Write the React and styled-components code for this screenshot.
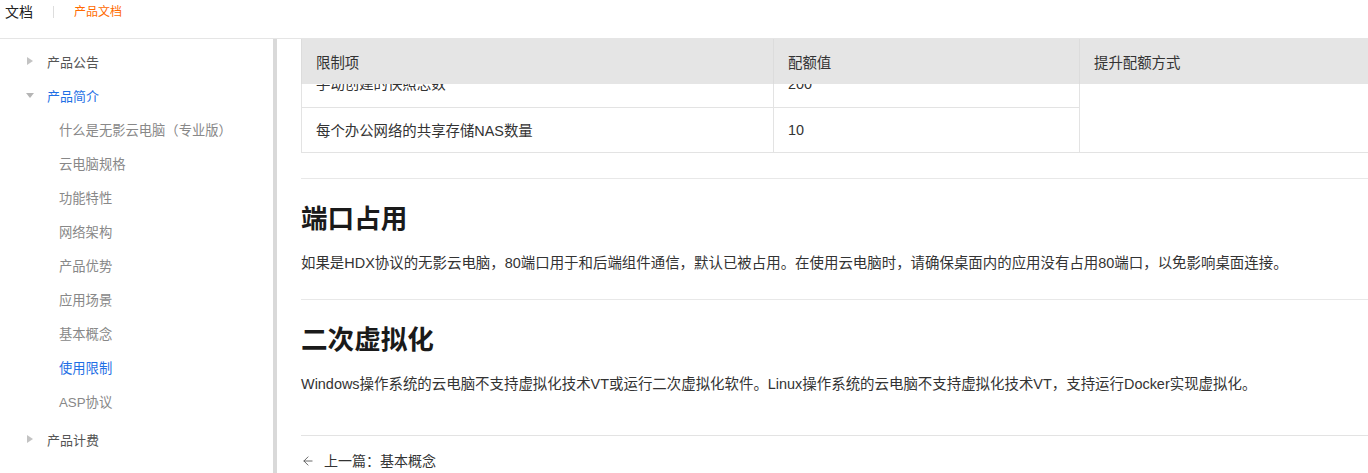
import React from "react";
import styled, { createGlobalStyle } from "styled-components";
import { ArrowLeft } from "lucide-react";

const GlobalStyle = createGlobalStyle`
  html, body {
    margin: 0;
    padding: 0;
    background: #fff;
    overflow: hidden;
  }
  body {
    font-family: "Liberation Sans", "Noto Sans CJK SC", sans-serif;
    color: #333;
  }
`;

const Page = styled.div`
  width: 1368px;
  height: 473px;
  display: flex;
  flex-direction: column;
  overflow: hidden;
`;

const TopBar = styled.div`
  height: 39px;
  flex-shrink: 0;
  display: flex;
  align-items: flex-start;
  padding: 4px 0 0 5px;
  box-sizing: border-box;
  border-bottom: 1px solid #e5e5e5;
`;

const BrandText = styled.span`
  font-size: 14px;
  line-height: 16px;
  color: #222;
`;

const Sep = styled.span`
  width: 1px;
  height: 12px;
  margin: 2px 20px 0 20px;
  background: #ddd;
`;

const ProductLink = styled.span`
  font-size: 12px;
  line-height: 16px;
  color: #ff6a00;
`;

const Body = styled.div`
  flex: 1;
  display: flex;
  min-height: 0;
`;

const Sidebar = styled.nav`
  width: 277px;
  flex-shrink: 0;
  padding-top: 5px;
  box-sizing: border-box;
  border-right: 4px solid #d9d9d9;
`;

const NavRow = styled.div`
  height: 34px;
  display: flex;
  align-items: center;
  font-size: ${(p) => (p.$child ? "13.3px" : "13px")};
  padding-left: ${(p) => (p.$child ? "59px" : "27px")};
  color: ${(p) => (p.$active ? "#1f6fe5" : p.$child ? "#888" : "#555")};
`;

const Caret = styled.span`
  width: 0;
  height: 0;
  margin-right: 14px;
  ${(p) =>
    p.$open
      ? `border-left: 4px solid transparent;
         border-right: 4px solid transparent;
         border-top: 5px solid #b5b5b5;
         margin-left: -1px;
         margin-right: 13px;`
      : `border-top: 4px solid transparent;
         border-bottom: 4px solid transparent;
         border-left: 6px solid #c3c3c3;`}
`;

const ChildGroup = styled.div`
  padding-bottom: 4px;
`;

const Main = styled.main`
  flex: 1;
  overflow: hidden;
  padding-left: 24px;
`;

const Article = styled.div`
  width: 1100px;
`;

const Table = styled.table`
  width: 1090px;
  border-collapse: collapse;
  font-size: 14.4px;
  color: #333;
`;

const Th = styled.th`
  background: #e5e5e5;
  height: 45px;
  padding: 0 14px;
  text-align: left;
  font-weight: normal;
  width: ${(p) => p.$w || "auto"};
  border-left: 1px solid #dcdcdc;
  border-right: 1px solid #dcdcdc;
  box-sizing: border-box;
`;

const Td = styled.td`
  padding: 0 14px;
  height: ${(p) => p.$h || "45px"};
  border: 1px solid #e3e3e3;
  border-top: ${(p) => (p.$noTop ? "none" : "1px solid #e3e3e3")};
  vertical-align: ${(p) => (p.$clip ? "top" : "middle")};
  box-sizing: border-box;
`;

const ClipBox = styled.div`
  height: 22px;
  overflow: hidden;
`;

const ClipText = styled.div`
  line-height: 22px;
  margin-top: -11px;
`;

const Section = styled.section`
  border-top: 1px solid #e8e8e8;
  margin-top: 25px;
  padding-top: 22px;
`;

const Heading = styled.h2`
  margin: 0;
  font-size: 26.6px;
  line-height: 36px;
  font-weight: 700;
  color: #1a1a1a;
`;

const Para = styled.p`
  margin: 15px 0 0;
  font-size: 14.45px;
  line-height: 22px;
  color: #333;
`;

const Footer = styled.div`
  border-top: 1px solid #e3e3e3;
  margin-top: 40px;
  padding-top: 15px;
  display: flex;
  align-items: center;
  gap: 9px;
  font-size: 14px;
  line-height: 20px;
  color: #333;
`;

const children = [
  "什么是无影云电脑（专业版）",
  "云电脑规格",
  "功能特性",
  "网络架构",
  "产品优势",
  "应用场景",
  "基本概念",
  "使用限制",
  "ASP协议",
];

export default function App() {
  return (
    <Page>
      <GlobalStyle />
      <TopBar>
        <BrandText>文档</BrandText>
        <Sep />
        <ProductLink>产品文档</ProductLink>
      </TopBar>
      <Body>
        <Sidebar>
          <NavRow>
            <Caret />
            产品公告
          </NavRow>
          <NavRow $active>
            <Caret $open />
            产品简介
          </NavRow>
          <ChildGroup>
            {children.map((c) => (
              <NavRow key={c} $child $active={c === "使用限制"}>
                {c}
              </NavRow>
            ))}
          </ChildGroup>
          <NavRow>
            <Caret />
            产品计费
          </NavRow>
        </Sidebar>
        <Main>
          <Article>
            <Table>
              <thead>
                <tr>
                  <Th $w="472px">限制项</Th>
                  <Th $w="306px">配额值</Th>
                  <Th>提升配额方式</Th>
                </tr>
              </thead>
              <tbody>
                <tr>
                  <Td $h="23px" $clip $noTop>
                    <ClipBox>
                      <ClipText>手动创建的快照总数</ClipText>
                    </ClipBox>
                  </Td>
                  <Td $h="23px" $clip $noTop>
                    <ClipBox>
                      <ClipText>200</ClipText>
                    </ClipBox>
                  </Td>
                  <Td rowSpan={2} $noTop />
                </tr>
                <tr>
                  <Td>每个办公网络的共享存储NAS数量</Td>
                  <Td>10</Td>
                </tr>
              </tbody>
            </Table>
            <Section>
              <Heading>端口占用</Heading>
              <Para>
                如果是HDX协议的无影云电脑，80端口用于和后端组件通信，默认已被占用。在使用云电脑时，请确保桌面内的应用没有占用80端口，以免影响桌面连接。
              </Para>
            </Section>
            <Section>
              <Heading>二次虚拟化</Heading>
              <Para>
                Windows操作系统的云电脑不支持虚拟化技术VT或运行二次虚拟化软件。Linux操作系统的云电脑不支持虚拟化技术VT，支持运行Docker实现虚拟化。
              </Para>
            </Section>
            <Footer>
              <ArrowLeft size={14} strokeWidth={1.5} color="#555" />
              <span>上一篇：基本概念</span>
            </Footer>
          </Article>
        </Main>
      </Body>
    </Page>
  );
}
